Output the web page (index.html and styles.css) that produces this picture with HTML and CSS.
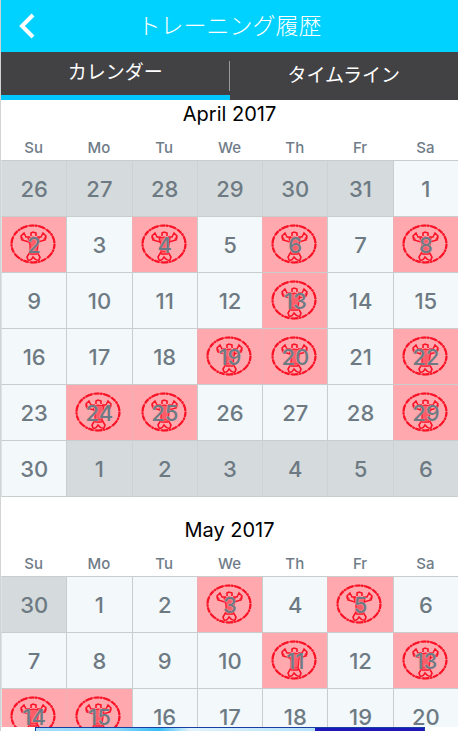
FILE: index.html
```html
<!DOCTYPE html>
<html lang="ja">
<head>
    <meta charset="UTF-8">
    <meta name="viewport" content="width=device-width, initial-scale=1.0">
    <title>トレーニング履歴</title>
    <link rel="stylesheet" href="styles.css">
</head>
<body>
    <header>
        <button class="back" aria-label="戻る">
            <svg width="16" height="26" viewBox="0 0 16 26"><path d="M14 2L3 13L14 24" fill="none" stroke="white" stroke-width="4"/></svg>
        </button>
        <h1>トレーニング履歴</h1>
    </header>
    <nav>
        <button class="tab active">カレンダー</button>
        <button class="tab">タイムライン</button>
    </nav>
    <main id="calendars"></main>
    <footer>
        <a class="banner" href="#" aria-label="広告">
            <span class="sky"></span>
            <span class="navy"></span>
        </a>
    </footer>

    <script>
        const weekDays = ["Su", "Mo", "Tu", "We", "Th", "Fr", "Sa"]
        const months = [
            {year: 2017, month: 3, name: "April", trained: [2, 4, 6, 8, 13, 19, 20, 22, 24, 25, 29]},
            {year: 2017, month: 4, name: "May", trained: [3, 5, 11, 13, 14, 15]},
        ]

        // carimbo do dia treinado
        const stamp = `<svg class="stamp" viewBox="0 0 46 40" fill="none" stroke="#fa1226" aria-hidden="true">
            <ellipse cx="23" cy="20" rx="21.5" ry="18.5" stroke-width="1.4" stroke-opacity=".7"/>
            <ellipse cx="23" cy="20" rx="21.5" ry="18.5" stroke-width="2.2" stroke-dasharray="5 1 2 1 7 2"/>
            <path d="M20 13L16 13L14 9L11 12L12 16L19 18M27 13L31 13L33 9L36 12L35 16L28 18" stroke-width="1.5"/>
            <path d="M11 13L13 16M36 13L34 16" stroke-width="2.6" stroke-opacity=".6"/>
            <path d="M21 12L21 9L23 8L26 9L26 12" stroke-width="1.6"/>
            <path d="M18 14L23 13L29 14L28 21L27 28L20 28L20 21Z" stroke-width="1.2" fill="#fa1226" fill-opacity=".5"/>
            <path d="M20 28L17 33L18 36M27 28L30 33L29 36M18 36Q21 37 23 33Q26 37 29 36M20 30L27 30" stroke-width="1.6"/>
        </svg>`

        function drawMonth(m){
            const first = new Date(m.year, m.month, 1).getDay()
            const total = new Date(m.year, m.month + 1, 0).getDate()
            const weeks = Math.ceil((first + total) / 7)
            let rows = ""

            for(let w = 0; w < weeks; w++){
                rows += "<tr>"
                for(let d = 0; d < 7; d++){
                    const day = w * 7 + d - first + 1
                    const date = new Date(m.year, m.month, day).getDate()
                    if(day < 1 || day > total){
                        rows += `<td class="outside">${date}</td>`
                    } else if(m.trained.includes(day)){
                        rows += `<td class="trained">${stamp}<span>${date}</span></td>`
                    } else{
                        rows += `<td>${date}</td>`
                    }
                }
                rows += "</tr>"
            }

            const table = document.createElement("table")
            table.innerHTML = `<caption>${m.name} ${m.year}</caption>
                <thead><tr>${weekDays.map(d => `<th scope="col">${d}</th>`).join("")}</tr></thead>
                <tbody>${rows}</tbody>`
            document.getElementById("calendars").appendChild(table)
        }

        months.forEach(drawMonth)
    </script>
</body>
</html>
```

FILE: styles.css
```css
*{
    box-sizing: border-box;
}
body{
    margin: 0;
    height: 100vh;
    display: flex;
    flex-direction: column;
    overflow: hidden;
    border-left: 1px solid #d0d4d5;
    background-color: white;
    font-family: Inter, "Noto Sans CJK JP", sans-serif;
}
button{
    border: 0;
    padding: 0;
    background: none;
    color: white;
    font-family: inherit;
    cursor: pointer;
}
header{
    flex: none;
    height: 52px;
    display: grid;
    grid-template-columns: 52px 1fr 52px;
    align-items: center;
    background-color: #00d2ff;
    color: white;
}
.back{
    height: 52px;
}
.back svg{
    display: block;
    margin: 0 auto;
}
h1{
    margin: 0;
    padding-bottom: 4px;
    text-align: center;
    font-family: "Noto Sans CJK JP", sans-serif;
    font-size: 23px;
    font-weight: 300;
    line-height: 48px;
}
nav{
    flex: none;
    height: 48px;
    display: flex;
    background: linear-gradient(#999, #999) center / 1px 30px no-repeat #424244;
}
.tab{
    flex: 1;
    padding-bottom: 5px;
    font-size: 19px;
    font-family: "Noto Sans CJK JP", sans-serif;
    font-weight: 400;
    line-height: 32px;
}
.tab.active{
    border-bottom: 5px solid #00c8ff;
}
main{
    flex: 1;
    min-height: 0;
    overflow: hidden;
}
table{
    width: 100%;
    table-layout: fixed;
    border-collapse: separate;
    border-spacing: 0;
    margin-bottom: 19px;
}
caption{
    height: 36px;
    font-size: 20px;
    line-height: 28px;
    color: black;
}
th{
    height: 24px;
    padding: 0;
    font-size: 15px;
    font-weight: 500;
    line-height: 24px;
    color: #6f7c88;
}
td{
    height: 56px;
    padding: 0;
    position: relative;
    border-top: 1px solid #c8cdce;
    border-left: 1px solid #c8cdce;
    background-color: #f3f8fa;
    text-align: center;
    font-size: 22px;
    font-weight: 500;
    line-height: 28px;
    color: #6d7a83;
}
td:first-child{
    border-left-color: #dde2e3;
}
tbody tr:last-child td{
    height: 57px;
    border-bottom: 1px solid #c8cdce;
}
.outside{
    background-color: #d5dbdc;
}
.outside + .outside{
    border-left-color: #cdd3d4;
}
.trained{
    background-color: #ffa8ad;
    border-left-color: #eeb0b5;
}
.trained span{
    position: relative;
    text-shadow: 0 0 1px #ffa8ad, 0 0 1px #ffa8ad;
}
.stamp{
    position: absolute;
    top: 7px;
    left: 8px;
    width: 46px;
    height: 40px;
}
footer{
    flex: none;
    padding: 0 33px 0 34px;
    background-color: white;
}
.banner{
    height: 4px;
    display: flex;
    border: 1px solid #1a3fa0;
    border-bottom: 0;
    background-color: #1f18b8;
}
.sky{
    flex: 72%;
    background: linear-gradient(90deg, #a6dcfa, #8fd8fb 28%, #38bdf8 44%, #dff4fe 55%, #b5e2fb);
}
.navy{
    flex: 28%;
}
```
